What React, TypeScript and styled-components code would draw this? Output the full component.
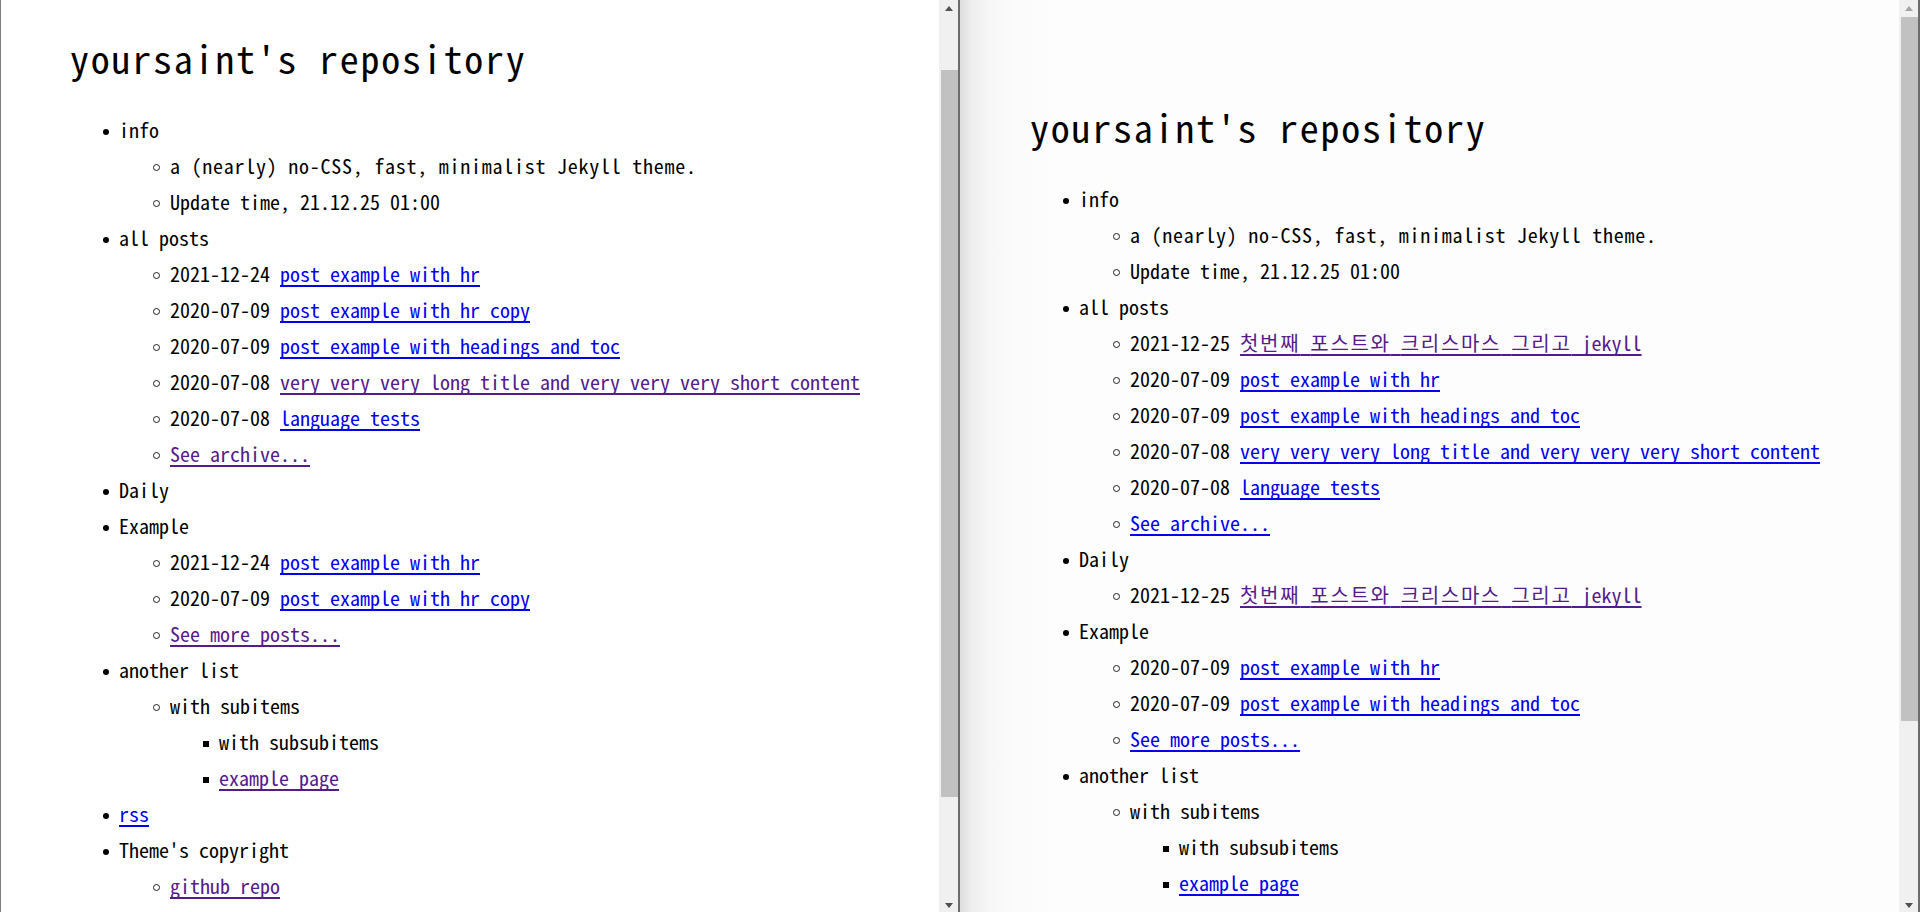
import React from "react";
import styled, { createGlobalStyle, css } from "styled-components";

const GlobalStyle = createGlobalStyle`
  html, body {
    margin: 0;
    padding: 0;
    height: 100%;
    overflow: hidden;
    background: #ffffff;
  }
  #root { height: 100%; }
`;

const MONO = `"Noto Sans Mono CJK KR", "Noto Sans Mono CJK SC", "Noto Sans CJK KR", "DejaVu Sans Mono", monospace`;

type Link = { label: string; visited?: boolean };
type Item = { text?: string; wide?: boolean; date?: string; link?: Link; children?: Item[] };

const Desktop = styled.div`
  display: flex;
  width: 1920px;
  height: 912px;
  overflow: hidden;
  background: #ffffff;
`;

const Window = styled.div<{ $borderLeft?: boolean }>`
  flex: 0 0 960px;
  display: flex;
  height: 100%;
  box-sizing: border-box;
  border-left: ${(p) => (p.$borderLeft ? "1px solid #7c7c7c" : "none")};
  border-right: 2px solid #6c6c6c;
`;

const Viewport = styled.div<{ $shaded?: boolean }>`
  flex: 1;
  min-width: 0;
  overflow: hidden;
  background: ${(p) =>
    p.$shaded
      ? "linear-gradient(to right, #dedede 0px, #eeeeee 12px, #f7f7f7 30px, #fbfbfb 55px, #fdfdfd 90px, #fdfdfd 100%)"
      : "#ffffff"};
`;

const Page = styled.div<{ $top: number; $left: number }>`
  padding: ${(p) => p.$top}px 0 0 ${(p) => p.$left}px;
  font-family: ${MONO};
  color: #000;
`;

const Title = styled.h1`
  margin: 0;
  font-size: 38px;
  line-height: 44px;
  font-weight: normal;
  letter-spacing: 1.75px;
  white-space: nowrap;
`;

const List = styled.ul<{ $first?: boolean }>`
  margin: ${(p) => (p.$first ? "32px 0 0 0" : "0")};
  padding-left: 50px;
  list-style: none;
`;

const bulletShape = (level: number) => {
  if (level === 0)
    return css`
      width: 6px;
      height: 6px;
      border-radius: 50%;
      background: #000;
    `;
  if (level === 1)
    return css`
      width: 5px;
      height: 5px;
      border-radius: 50%;
      border: 1.3px solid #222;
      background: transparent;
    `;
  return css`
    width: 6px;
    height: 6px;
    background: #000;
  `;
};

const Row = styled.li<{ $level: number }>`
  font-size: 20px;
  line-height: 36px;
  letter-spacing: 0;
  white-space: nowrap;

  &::before {
    content: "";
    display: inline-block;
    box-sizing: content-box;
    vertical-align: middle;
    margin: -2px 10px 0 -17px;
    ${(p) => bulletShape(p.$level)}
  }
`;

const Plain = styled.span<{ $wide?: boolean }>`
  letter-spacing: ${(p) => (p.$wide ? "0.75px" : "0")};
`;

const Anchor = styled.a<{ $visited?: boolean }>`
  color: ${(p) => (p.$visited ? "#551a8b" : "#0000ee")};
  text-decoration: underline;
  text-decoration-thickness: 2px;
  text-underline-offset: 3px;
  text-decoration-skip-ink: none;
  cursor: pointer;
`;

const Hangul = styled.span`
  letter-spacing: 1.7px;
`;

const Scrollbar = styled.div`
  flex: 0 0 19px;
  display: flex;
  flex-direction: column;
  background: #f0f0f0;
`;

const ArrowCell = styled.div`
  flex: 0 0 17px;
  display: flex;
  align-items: center;
  justify-content: center;
`;

const Arrow = styled.div<{ $dir: "up" | "down"; $dim?: boolean }>`
  width: 0;
  height: 0;
  border-left: 4.5px solid transparent;
  border-right: 4.5px solid transparent;
  ${(p) =>
    p.$dir === "up"
      ? `border-bottom: 5px solid ${p.$dim ? "#a3a3a3" : "#505050"};`
      : `border-top: 5px solid ${p.$dim ? "#a3a3a3" : "#505050"}; margin-top: 3px;`}
`;

const Track = styled.div`
  flex: 1;
  padding-left: 2px;
`;

const Thumb = styled.div<{ $offset: number; $size: number }>`
  width: 17px;
  margin-top: ${(p) => p.$offset}px;
  height: ${(p) => p.$size}px;
  background: #c1c1c1;
`;

const info: Item = {
  text: "info",
  children: [
    { text: "a (nearly) no-CSS, fast, minimalist Jekyll theme.", wide: true },
    { text: "Update time, 21.12.25 01:00" },
  ],
};

const KO_TITLE = "첫번째 포스트와 크리스마스 그리고 jekyll";

const leftItems: Item[] = [
  info,
  {
    text: "all posts",
    children: [
      { date: "2021-12-24", link: { label: "post example with hr" } },
      { date: "2020-07-09", link: { label: "post example with hr copy" } },
      { date: "2020-07-09", link: { label: "post example with headings and toc" } },
      {
        date: "2020-07-08",
        link: { label: "very very very long title and very very very short content", visited: true },
      },
      { date: "2020-07-08", link: { label: "language tests" } },
      { link: { label: "See archive...", visited: true } },
    ],
  },
  { text: "Daily" },
  {
    text: "Example",
    children: [
      { date: "2021-12-24", link: { label: "post example with hr" } },
      { date: "2020-07-09", link: { label: "post example with hr copy" } },
      { link: { label: "See more posts...", visited: true } },
    ],
  },
  {
    text: "another list",
    children: [
      {
        text: "with subitems",
        children: [{ text: "with subsubitems" }, { link: { label: "example page", visited: true } }],
      },
    ],
  },
  { link: { label: "rss" } },
  { text: "Theme's copyright", children: [{ link: { label: "github repo", visited: true } }] },
];

const rightItems: Item[] = [
  info,
  {
    text: "all posts",
    children: [
      { date: "2021-12-25", link: { label: KO_TITLE, visited: true } },
      { date: "2020-07-09", link: { label: "post example with hr" } },
      { date: "2020-07-09", link: { label: "post example with headings and toc" } },
      { date: "2020-07-08", link: { label: "very very very long title and very very very short content" } },
      { date: "2020-07-08", link: { label: "language tests" } },
      { link: { label: "See archive..." } },
    ],
  },
  { text: "Daily", children: [{ date: "2021-12-25", link: { label: KO_TITLE, visited: true } }] },
  {
    text: "Example",
    children: [
      { date: "2020-07-09", link: { label: "post example with hr" } },
      { date: "2020-07-09", link: { label: "post example with headings and toc" } },
      { link: { label: "See more posts..." } },
    ],
  },
  {
    text: "another list",
    children: [
      {
        text: "with subitems",
        children: [{ text: "with subsubitems" }, { link: { label: "example page" } }],
      },
    ],
  },
  { link: { label: "rss" } },
  { text: "Theme's copyright", children: [{ link: { label: "github repo" } }] },
];

function renderLabel(label: string) {
  return label.split(/([\uac00-\ud7a3]+)/).map((part, i) =>
    /[\uac00-\ud7a3]/.test(part) ? (
      <Hangul key={i}>{part}</Hangul>
    ) : (
      <React.Fragment key={i}>{part}</React.Fragment>
    )
  );
}

function Tree({ items, level, first }: { items: Item[]; level: number; first?: boolean }) {
  return (
    <List $first={first}>
      {items.map((item, i) => (
        <Row key={i} $level={level}>
          {item.text ? <Plain $wide={item.wide}>{item.text}</Plain> : null}
          {item.date ? `${item.date} ` : null}
          {item.link ? <Anchor $visited={item.link.visited}>{renderLabel(item.link.label)}</Anchor> : null}
          {item.children ? <Tree items={item.children} level={level + 1} /> : null}
        </Row>
      ))}
    </List>
  );
}

function Bar({ offset, size, dimTop }: { offset: number; size: number; dimTop?: boolean }) {
  return (
    <Scrollbar>
      <ArrowCell>
        <Arrow $dir="up" $dim={dimTop} />
      </ArrowCell>
      <Track>
        <Thumb $offset={offset} $size={size} />
      </Track>
      <ArrowCell>
        <Arrow $dir="down" />
      </ArrowCell>
    </Scrollbar>
  );
}

export default function App() {
  return (
    <>
      <GlobalStyle />
      <Desktop>
        <Window $borderLeft>
          <Viewport>
            <Page $top={36} $left={69}>
              <Title>yoursaint's repository</Title>
              <Tree items={leftItems} level={0} first />
            </Page>
          </Viewport>
          <Bar offset={53} size={727} />
        </Window>
        <Window>
          <Viewport $shaded>
            <Page $top={105} $left={70}>
              <Title>yoursaint's repository</Title>
              <Tree items={rightItems} level={0} first />
            </Page>
          </Viewport>
          <Bar offset={0} size={704} dimTop />
        </Window>
      </Desktop>
    </>
  );
}
